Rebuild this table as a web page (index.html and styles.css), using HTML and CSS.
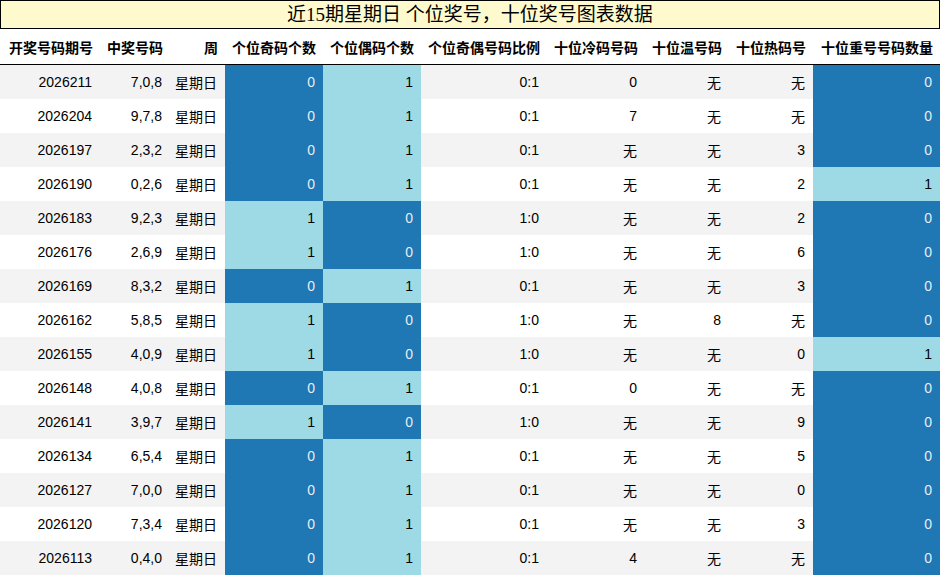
FILE: index.html
```html
<!DOCTYPE html>
<html lang="zh">
<head>
<meta charset="utf-8">
<link rel="stylesheet" href="styles.css">
</head>
<body>
<div class="title">近15期星期日 个位奖号，十位奖号图表数据</div>
<table class="data">
<colgroup>
<col class="w100"><col class="w70"><col class="w55"><col class="w98"><col class="w98"><col class="w126"><col class="w98"><col class="w84"><col class="w84"><col class="w127">
</colgroup>
<thead>
<tr><th>开奖号码期号</th><th>中奖号码</th><th>周</th><th>个位奇码个数</th><th>个位偶码个数</th><th>个位奇偶号码比例</th><th>十位冷码号码</th><th>十位温号码</th><th>十位热码号</th><th>十位重号号码数量</th></tr>
</thead>
<tbody>
<tr><td>2026211</td><td>7,0,8</td><td>星期日</td><td class="dk">0</td><td class="lt">1</td><td>0:1</td><td>0</td><td>无</td><td>无</td><td class="dk">0</td></tr>
<tr><td>2026204</td><td>9,7,8</td><td>星期日</td><td class="dk">0</td><td class="lt">1</td><td>0:1</td><td>7</td><td>无</td><td>无</td><td class="dk">0</td></tr>
<tr><td>2026197</td><td>2,3,2</td><td>星期日</td><td class="dk">0</td><td class="lt">1</td><td>0:1</td><td>无</td><td>无</td><td>3</td><td class="dk">0</td></tr>
<tr><td>2026190</td><td>0,2,6</td><td>星期日</td><td class="dk">0</td><td class="lt">1</td><td>0:1</td><td>无</td><td>无</td><td>2</td><td class="lt">1</td></tr>
<tr><td>2026183</td><td>9,2,3</td><td>星期日</td><td class="lt">1</td><td class="dk">0</td><td>1:0</td><td>无</td><td>无</td><td>2</td><td class="dk">0</td></tr>
<tr><td>2026176</td><td>2,6,9</td><td>星期日</td><td class="lt">1</td><td class="dk">0</td><td>1:0</td><td>无</td><td>无</td><td>6</td><td class="dk">0</td></tr>
<tr><td>2026169</td><td>8,3,2</td><td>星期日</td><td class="dk">0</td><td class="lt">1</td><td>0:1</td><td>无</td><td>无</td><td>3</td><td class="dk">0</td></tr>
<tr><td>2026162</td><td>5,8,5</td><td>星期日</td><td class="lt">1</td><td class="dk">0</td><td>1:0</td><td>无</td><td>8</td><td>无</td><td class="dk">0</td></tr>
<tr><td>2026155</td><td>4,0,9</td><td>星期日</td><td class="lt">1</td><td class="dk">0</td><td>1:0</td><td>无</td><td>无</td><td>0</td><td class="lt">1</td></tr>
<tr><td>2026148</td><td>4,0,8</td><td>星期日</td><td class="dk">0</td><td class="lt">1</td><td>0:1</td><td>0</td><td>无</td><td>无</td><td class="dk">0</td></tr>
<tr><td>2026141</td><td>3,9,7</td><td>星期日</td><td class="lt">1</td><td class="dk">0</td><td>1:0</td><td>无</td><td>无</td><td>9</td><td class="dk">0</td></tr>
<tr><td>2026134</td><td>6,5,4</td><td>星期日</td><td class="dk">0</td><td class="lt">1</td><td>0:1</td><td>无</td><td>无</td><td>5</td><td class="dk">0</td></tr>
<tr><td>2026127</td><td>7,0,0</td><td>星期日</td><td class="dk">0</td><td class="lt">1</td><td>0:1</td><td>无</td><td>无</td><td>0</td><td class="dk">0</td></tr>
<tr><td>2026120</td><td>7,3,4</td><td>星期日</td><td class="dk">0</td><td class="lt">1</td><td>0:1</td><td>无</td><td>无</td><td>3</td><td class="dk">0</td></tr>
<tr><td>2026113</td><td>0,4,0</td><td>星期日</td><td class="dk">0</td><td class="lt">1</td><td>0:1</td><td>4</td><td>无</td><td>无</td><td class="dk">0</td></tr>
</tbody>
</table>
</body>
</html>
```
FILE: styles.css
```css
html, body {
  margin: 0;
  padding: 0;
  background: #fff;
}
body {
  font-family: "Liberation Sans", "Noto Sans CJK SC", sans-serif;
  color: #000;
  width: 940px;
}
.title {
  height: 27px;
  border: 1px solid #000;
  background: #fffacd;
  text-align: center;
  font-family: "Liberation Serif", "Noto Sans CJK SC", serif;
  font-size: 19px;
  line-height: 28px;
}
.data {
  border-collapse: collapse;
  table-layout: fixed;
  width: 940px;
  font-size: 14px;
}
.w100 { width: 100px; }
.w70 { width: 70px; }
.w55 { width: 55px; }
.w98 { width: 98px; }
.w126 { width: 126px; }
.w84 { width: 84px; }
.w127 { width: 127px; }
.data th {
  height: 35px;
  padding: 0 7px 0 0;
  text-align: right;
  font-weight: bold;
  white-space: nowrap;
  border-bottom: 1px solid #000;
}
.data td {
  height: 34px;
  padding: 0 8px 0 0;
  text-align: right;
  white-space: nowrap;
}
.data tbody tr:nth-child(odd) { background: #f3f3f3; }
.data tbody tr:nth-child(even) { background: #fff; }
.data td.dk { background: #1f77b4; color: #e8eef4; }
.data td.lt { background: #9edae5; color: #000; }
```
